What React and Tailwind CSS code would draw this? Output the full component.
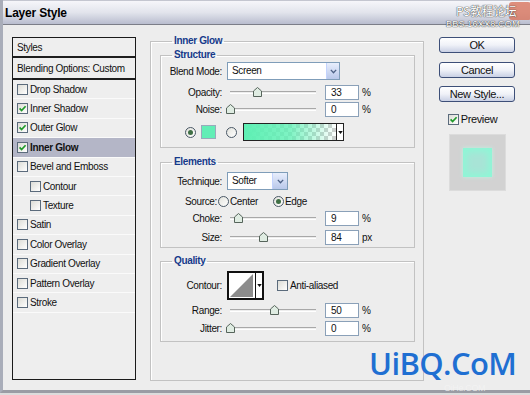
import React from "react";

const font = "font-['Liberation_Sans',Arial,sans-serif]";

const styles = [
  { name: "Drop Shadow", on: false },
  { name: "Inner Shadow", on: true },
  { name: "Outer Glow", on: true },
  { name: "Inner Glow", on: true, active: true },
  { name: "Bevel and Emboss", on: false },
  { name: "Contour", on: false, sub: true },
  { name: "Texture", on: false, sub: true },
  { name: "Satin", on: false },
  { name: "Color Overlay", on: false },
  { name: "Gradient Overlay", on: false },
  { name: "Pattern Overlay", on: false },
  { name: "Stroke", on: false },
];

function Check({ on }) {
  return (
    <span className="w-[11px] h-[11px] border border-[#5b6b7c] bg-linear-to-br from-[#dcdcd6] to-white flex items-center justify-center shrink-0">
      {on && (
        <svg viewBox="0 0 9 9" className="w-[9px] h-[9px]">
          <path d="M1.6 4.4 L3.6 6.6 L7.6 2.2" stroke="#1f9a2a" strokeWidth="1.7" fill="none" />
        </svg>
      )}
    </span>
  );
}

function Radio({ on }) {
  return (
    <span className="w-[11px] h-[11px] rounded-full border border-[#4a5866] bg-linear-to-br from-[#e2e2dc] to-white flex items-center justify-center shrink-0">
      {on && <span className="w-[5px] h-[5px] rounded-full bg-[#3f6f45]" />}
    </span>
  );
}

function DropBtn({ w = "w-[13px]" }) {
  return (
    <div className={`${w} h-full bg-linear-to-b from-[#e8eefc] to-[#b9c8ea] border-l border-[#c3d3fd] flex items-center justify-center`}>
      <svg viewBox="0 0 8 6" className="w-[7px] h-[5px]">
        <path d="M0.8 1 L4 4.4 L7.2 1" stroke="#4d6185" strokeWidth="1.6" fill="none" />
      </svg>
    </div>
  );
}

function Slider({ at }) {
  return (
    <div className="relative w-[86px] h-[14px] ml-[8px]">
      <div className="absolute left-0 right-0 top-[6px] h-[3px] border-t border-[#a8a8a8] border-b border-b-white" />
      <svg className="absolute top-[2px]" style={{ left: at - 4 }} width="9" height="10" viewBox="0 0 9 10">
        <path d="M0.5 4 L4.5 0.5 L8.5 4 V9.5 H0.5 Z" fill="#dfece2" stroke="#56645b" />
      </svg>
    </div>
  );
}

function NumBox({ v, unit }) {
  return (
    <div className="flex items-center ml-[9px]">
      <div className="w-[34px] h-[15px] bg-white border border-[#8aa0b8] pl-[5px] leading-[13px]">{v}</div>
      <span className="ml-[3px]">{unit}</span>
    </div>
  );
}

function Label({ children }) {
  return <span className="w-[61px] text-right shrink-0">{children}</span>;
}

function SliderRow({ label, at, v, unit = "%", className = "" }) {
  return (
    <div className={`flex items-center h-[16px] ${className}`}>
      <Label>{label}</Label>
      <Slider at={at} />
      <NumBox v={v} unit={unit} />
    </div>
  );
}

function Group({ title, className = "", children }) {
  return (
    <fieldset className={`border border-[#c2c2c2] shadow-[inset_1px_1px_0_#fff] ${className}`}>
      <legend className="ml-[11px] px-[2px] font-bold text-[#163a8a] leading-[12px]">{title}</legend>
      {children}
    </fieldset>
  );
}

function Button({ children, className = "" }) {
  return (
    <div className={`w-[76px] h-[16px] rounded-[3px] border border-[#3d4f78] bg-linear-to-b from-white via-[#f0f2f8] to-[#c9d0e4] flex items-center justify-center text-[11px] text-[#111] ${className}`}>
      {children}
    </div>
  );
}

export default function App() {
  return (
    <div className={`${font} relative w-[530px] h-[395px] overflow-hidden bg-[#dcdcdc] text-[10px] tracking-[-0.35px] text-[#111]`}>
      <div className="h-[393px] bg-[#ededed] border-l-[3px] border-l-[#a9adb9] border-b-[3px] border-b-[#9a9ca4] flex flex-col">
        {/* title bar */}
        <div className="h-[25px] shrink-0 border-t border-[#c4c6d0] border-b border-b-[#7c7e88] bg-linear-to-b from-[#f6f6fa] via-[#e2e4ec] to-[#b9bdcf] flex items-center pl-[2px]">
          <span className="text-[12px] font-bold tracking-[-0.2px] text-black">Layer Style</span>
        </div>

        <div className="flex flex-1">
          {/* styles list */}
          <div className="ml-[9px] mt-[12px] w-[124px] h-[343px] border border-[#1a1a1a] bg-[#eeeeee] flex flex-col">
            <div className="h-[20px] border-b-2 border-[#1e1e1e] flex items-center pl-[4px]">Styles</div>
            <div className="h-[22px] border-b-2 border-[#1e1e1e] flex items-center pl-[4px]">Blending Options: Custom</div>
            {styles.map((s) => (
              <div
                key={s.name}
                className={`h-[19.4px] border-b border-b-[#fafafa] flex items-center gap-[2px] ${s.sub ? "pl-[17px]" : "pl-[4px]"} ${s.active ? "bg-[#b4b6c7] font-bold" : ""}`}
              >
                <Check on={s.on} />
                <span>{s.name}</span>
              </div>
            ))}
          </div>

          {/* main settings */}
          <fieldset className="ml-[14px] mt-[10px] w-[274px] h-[346px] border border-[#c2c2c2] shadow-[inset_1px_1px_0_#fff] pl-[9px] pr-[8px]">
            <legend className="ml-[12px] px-[2px] font-bold text-[#163a8a] leading-[12px]">Inner Glow</legend>

            <Group title="Structure" className="mt-[2px] pb-[6px]">
              <div className="flex items-center h-[18px] mt-[1px]">
                <Label>Blend Mode:</Label>
                <div className="ml-[5px] w-[113px] h-[18px] bg-white border border-[#7f9db9] flex">
                  <span className="flex-1 pl-[4px] leading-[16px]">Screen</span>
                  <DropBtn />
                </div>
              </div>
              <SliderRow label="Opacity:" at={27} v="33" className="mt-[4px]" />
              <SliderRow label="Noise:" at={0} v="0" className="mt-[1px]" />
              <div className="flex items-center h-[18px] mt-[6px] pl-[24px]">
                <Radio on />
                <span className="ml-[5px] w-[15px] h-[14px] bg-[#62eeb6] border border-[#9ab]" />
                <span className="ml-[10px]"><Radio /></span>
                <div className="ml-[6px] w-[101px] h-[18px] border border-[#222] flex bg-white">
                  <div className="flex-1 bg-[repeating-conic-gradient(#cfcfcf_0_25%,#ffffff_0_50%)] bg-[length:8px_8px]">
                    <div className="h-full bg-linear-to-r from-[#5ef0b4] via-[#5ef0b4cc] to-[#5ef0b400]" />
                  </div>
                  <div className="w-[7px] border-l border-[#222] flex items-center justify-center bg-white">
                    <svg viewBox="0 0 6 4" className="w-[5px] h-[3px]"><path d="M0 0 H6 L3 4 Z" fill="#111" /></svg>
                  </div>
                </div>
              </div>
            </Group>

            <Group title="Elements" className="mt-[8px] pb-[2px]">
              <div className="flex items-center h-[18px] mt-[4px]">
                <Label>Technique:</Label>
                <div className="ml-[5px] w-[61px] h-[18px] bg-white border border-[#7f9db9] flex">
                  <span className="flex-1 pl-[4px] leading-[16px]">Softer</span>
                  <DropBtn w="w-[15px]" />
                </div>
              </div>
              <div className="flex items-center h-[16px] mt-[3px]">
                <span className="w-[56px] text-right shrink-0">Source:</span>
                <span className="ml-[1px]"><Radio /></span>
                <span className="ml-[1px]">Center</span>
                <span className="ml-[15px]"><Radio on /></span>
                <span className="ml-[1px]">Edge</span>
              </div>
              <SliderRow label="Choke:" at={8} v="9" className="mt-[1px]" />
              <SliderRow label="Size:" at={33} v="84" unit="px" className="mt-[3px]" />
            </Group>

            <Group title="Quality" className="mt-[7px] pb-[5px]">
              <div className="flex items-center h-[29px] mt-[4px]">
                <Label>Contour:</Label>
                <div className="ml-[5px] h-[29px] flex border-2 border-[#111] bg-white">
                  <svg width="26" height="25" viewBox="0 0 26 25" className="block">
                    <rect width="26" height="25" fill="#fff" />
                    <path d="M1 24 L24 1 V24 Z" fill="#8c8c8c" />
                  </svg>
                  <div className="w-[7px] border-l border-[#111] flex items-center justify-center">
                    <svg viewBox="0 0 6 4" className="w-[5px] h-[3px]"><path d="M0 0 H6 L3 4 Z" fill="#111" /></svg>
                  </div>
                </div>
                <span className="ml-[13px]"><Check /></span>
                <span className="ml-[2px]">Anti-aliased</span>
              </div>
              <SliderRow label="Range:" at={44} v="50" className="mt-[2px]" />
              <SliderRow label="Jitter:" at={0} v="0" className="mt-[2px]" />
            </Group>
          </fieldset>

          {/* buttons */}
          <div className="ml-[15px] mt-[12px] flex flex-col items-center w-[76px]">
            <Button>OK</Button>
            <Button className="mt-[9px]">Cancel</Button>
            <Button className="mt-[8px]">New Style...</Button>
            <div className="mt-[9px] flex items-center gap-[2px] text-[11px] -ml-[9px]">
              <Check on />
              <span>Preview</span>
            </div>
            <div className="mt-[6px] w-[57px] h-[57px] bg-[#d2d2d2] border border-[#dcdcdc] flex items-center justify-center">
              <div className="w-[29px] h-[29px] bg-[#a8e4d6] shadow-[inset_0_0_6px_4px_#8ff6d6,0_0_4px_#bff4e4]" />
            </div>
          </div>
        </div>
      </div>

      {/* watermarks */}
      <div className="absolute left-[509px] top-[2px] w-[22px] h-[18px] rounded-[3px] bg-[#d8745c] opacity-80" />
      <div className="absolute left-[456px] top-[4px] text-[12px] leading-[14px] text-white font-['Noto_Sans_CJK_SC',sans-serif] [text-shadow:0_0_1px_#333,0_0_1px_#333]">PS教程论坛</div>
      <div className="absolute left-[446px] top-[19px] text-[9px] leading-[10px] tracking-[0.2px] text-white [text-shadow:0_0_1px_#333,0_0_1px_#333]">BBS.16XX8.COM</div>
      <div className="absolute left-[369px] top-[345px] text-[31px] leading-[37px] font-['Open_Sans',sans-serif] font-semibold tracking-[-0.6px] text-[#1f6fd2]">UiBQ.CoM</div>
      <div className="absolute left-[444px] top-[383px] text-[9px] leading-[10px] text-[#f4f4f4] opacity-80">OiHe.COM</div>
    </div>
  );
}
